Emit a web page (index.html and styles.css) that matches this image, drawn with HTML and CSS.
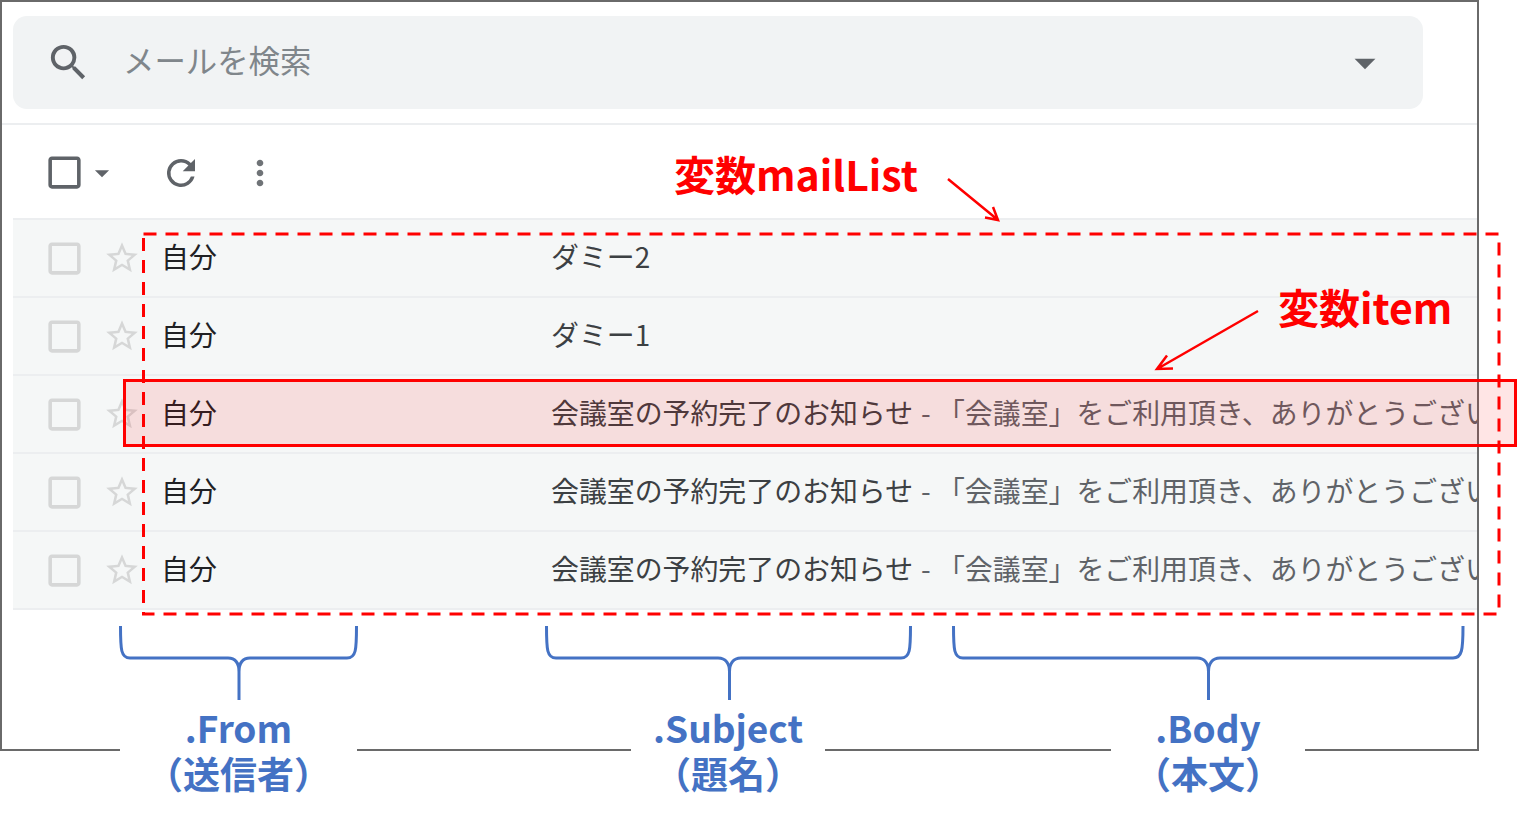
FILE: index.html
```html
<!DOCTYPE html>
<html lang="ja">
<head>
  <meta charset="UTF-8" />
  <title>mailList</title>
  <link rel="stylesheet" href="styles.css">
</head>
<body>
  <div class="frame">
    <!-- Search -->
    <div class="search">
      <svg class="search-icon" viewBox="0 0 24 24"><path d="M15.5 14h-.79l-.28-.27A6.47 6.47 0 0 0 16 9.5 6.5 6.5 0 1 0 9.5 16c1.61 0 3.09-.59 4.23-1.57l.27.28v.79l5 4.99L20.49 19l-4.99-5zm-6 0C7.01 14 5 11.99 5 9.5S7.01 5 9.5 5 14 7.01 14 9.5 11.99 14 9.5 14z"/></svg>
      <span class="search-text">メールを検索</span>
      <svg class="search-caret" viewBox="0 0 24 24"><path d="M7 10l5 5 5-5z"/></svg>
    </div>

    <!-- Toolbar -->
    <div class="toolbar">
      <svg class="tool-check" viewBox="0 0 24 24"><path d="M19 5v14H5V5h14m0-2H5c-1.1 0-2 .9-2 2v14c0 1.1.9 2 2 2h14c1.1 0 2-.9 2-2V5c0-1.1-.9-2-2-2z"/></svg>
      <svg class="tool-caret" viewBox="0 0 24 24"><path d="M7 10l5 5 5-5z"/></svg>
      <svg class="tool-refresh" viewBox="0 0 24 24"><path d="M17.65 6.35A7.96 7.96 0 0 0 12 4a8 8 0 1 0 7.73 10h-2.08A6 6 0 1 1 12 6c1.66 0 3.14.69 4.22 1.78L13 11h7V4l-2.35 2.35z"/></svg>
      <svg class="tool-more" viewBox="0 0 24 24"><path d="M12 8c1.1 0 2-.9 2-2s-.9-2-2-2-2 .9-2 2 .9 2 2 2zm0 2c-1.1 0-2 .9-2 2s.9 2 2 2 2-.9 2-2-.9-2-2-2zm0 6c-1.1 0-2 .9-2 2s.9 2 2 2 2-.9 2-2-.9-2-2-2z"/></svg>
    </div>

    <!-- Mail list -->
    <div class="mail-list">
      <div class="mail-row">
        <svg class="row-check" viewBox="0 0 24 24"><path d="M19 5v14H5V5h14m0-2H5c-1.1 0-2 .9-2 2v14c0 1.1.9 2 2 2h14c1.1 0 2-.9 2-2V5c0-1.1-.9-2-2-2z"/></svg>
        <svg class="row-star" viewBox="0 0 24 24"><path d="M22 9.24l-7.19-.62L12 2 9.19 8.63 2 9.24l5.46 4.73L5.82 21 12 17.27 18.18 21l-1.63-7.03L22 9.24zM12 15.4l-3.76 2.27 1-4.28-3.32-2.88 4.38-.38L12 6.1l1.71 4.04 4.38.38-3.32 2.88 1 4.28L12 15.4z"/></svg>
        <span class="from">自分</span>
        <span class="subject">ダミー2</span>
      </div>
      <div class="mail-row">
        <svg class="row-check" viewBox="0 0 24 24"><path d="M19 5v14H5V5h14m0-2H5c-1.1 0-2 .9-2 2v14c0 1.1.9 2 2 2h14c1.1 0 2-.9 2-2V5c0-1.1-.9-2-2-2z"/></svg>
        <svg class="row-star" viewBox="0 0 24 24"><path d="M22 9.24l-7.19-.62L12 2 9.19 8.63 2 9.24l5.46 4.73L5.82 21 12 17.27 18.18 21l-1.63-7.03L22 9.24zM12 15.4l-3.76 2.27 1-4.28-3.32-2.88 4.38-.38L12 6.1l1.71 4.04 4.38.38-3.32 2.88 1 4.28L12 15.4z"/></svg>
        <span class="from">自分</span>
        <span class="subject">ダミー1</span>
      </div>
      <div class="mail-row">
        <svg class="row-check" viewBox="0 0 24 24"><path d="M19 5v14H5V5h14m0-2H5c-1.1 0-2 .9-2 2v14c0 1.1.9 2 2 2h14c1.1 0 2-.9 2-2V5c0-1.1-.9-2-2-2z"/></svg>
        <svg class="row-star" viewBox="0 0 24 24"><path d="M22 9.24l-7.19-.62L12 2 9.19 8.63 2 9.24l5.46 4.73L5.82 21 12 17.27 18.18 21l-1.63-7.03L22 9.24zM12 15.4l-3.76 2.27 1-4.28-3.32-2.88 4.38-.38L12 6.1l1.71 4.04 4.38.38-3.32 2.88 1 4.28L12 15.4z"/></svg>
        <span class="from">自分</span>
        <span class="subject">会議室の予約完了のお知らせ</span>
        <span class="body-text">- 「会議室」をご利用頂き、ありがとうございます</span>
      </div>
      <div class="mail-row">
        <svg class="row-check" viewBox="0 0 24 24"><path d="M19 5v14H5V5h14m0-2H5c-1.1 0-2 .9-2 2v14c0 1.1.9 2 2 2h14c1.1 0 2-.9 2-2V5c0-1.1-.9-2-2-2z"/></svg>
        <svg class="row-star" viewBox="0 0 24 24"><path d="M22 9.24l-7.19-.62L12 2 9.19 8.63 2 9.24l5.46 4.73L5.82 21 12 17.27 18.18 21l-1.63-7.03L22 9.24zM12 15.4l-3.76 2.27 1-4.28-3.32-2.88 4.38-.38L12 6.1l1.71 4.04 4.38.38-3.32 2.88 1 4.28L12 15.4z"/></svg>
        <span class="from">自分</span>
        <span class="subject">会議室の予約完了のお知らせ</span>
        <span class="body-text">- 「会議室」をご利用頂き、ありがとうございます</span>
      </div>
      <div class="mail-row">
        <svg class="row-check" viewBox="0 0 24 24"><path d="M19 5v14H5V5h14m0-2H5c-1.1 0-2 .9-2 2v14c0 1.1.9 2 2 2h14c1.1 0 2-.9 2-2V5c0-1.1-.9-2-2-2z"/></svg>
        <svg class="row-star" viewBox="0 0 24 24"><path d="M22 9.24l-7.19-.62L12 2 9.19 8.63 2 9.24l5.46 4.73L5.82 21 12 17.27 18.18 21l-1.63-7.03L22 9.24zM12 15.4l-3.76 2.27 1-4.28-3.32-2.88 4.38-.38L12 6.1l1.71 4.04 4.38.38-3.32 2.88 1 4.28L12 15.4z"/></svg>
        <span class="from">自分</span>
        <span class="subject">会議室の予約完了のお知らせ</span>
        <span class="body-text">- 「会議室」をご利用頂き、ありがとうございます</span>
      </div>
    </div>
  </div>

  <!-- Annotations drawn over the screenshot -->
  <div class="item-box"></div>
  <svg class="marks" width="1517" height="821" viewBox="0 0 1517 821">
    <rect class="dash" x="143.500" y="234" width="1355.500" height="380"/>
    <path class="arrow" d="M948 179L998 220M985 217.500L998 220L993 207"/>
    <path class="arrow" d="M1258 311L1157 369M1173 368.500L1157 369L1167 355.500"/>
    <path class="brace" d="M120.500 626C120.500 650 121 658 130 658H228C236 658 239 664 239 672V700M239 672C239 664 242 658 250 658H347C356 658 356.500 650 356.500 626"/>
    <path class="brace" d="M546.500 626C546.500 650 547 658 556 658H718C726 658 729.500 664 729.500 672V700M729.500 672C729.500 664 733 658 741 658H901C910 658 910.500 650 910.500 626"/>
    <path class="brace" d="M953.500 626C953.500 650 954 658 963 658H1197C1205 658 1208.500 664 1208.500 672V700M1208.500 672C1208.500 664 1212 658 1220 658H1453C1462 658 1463 650 1463 626"/>
  </svg>
  <div class="note note-list">変数mailList</div>
  <div class="note note-item">変数item</div>
  <div class="label label-from">.From<br>（送信者）</div>
  <div class="label label-subject">.Subject<br>（題名）</div>
  <div class="label label-body">.Body<br>（本文）</div>
</body>
</html>
```

FILE: styles.css
```css
* { margin: 0; padding: 0; box-sizing: border-box; }
body {
  position: relative;
  width: 1517px;
  height: 821px;
  overflow: hidden;
  background: #fff;
  font-family: "Noto Sans CJK JP", "Noto Sans", sans-serif;
}

svg { display: block; flex: none; }


/* Screenshot frame */
.frame {
  width: 1479px;
  height: 751px;
  border: 2px solid #6a6a6a;
}

.search {
  display: flex;
  align-items: center;
  height: 93px;
  margin: 14px 54px 0 11px;
  background: #f1f3f4;
  border-radius: 14px;
}

.search-icon {
  width: 47px;
  height: 47px;
  margin-left: 32px;
  fill: #5f6368;
}

.search-text {
  margin-left: 31px;
  padding-bottom: 6px;
  font-size: 31.400px;
  color: #80868b;
}

.search-caret {
  width: 50px;
  height: 50px;
  margin-left: auto;
  margin-right: 33px;
  fill: #5f6368;
}

.toolbar {
  display: flex;
  align-items: center;
  height: 95px;
  margin-top: 14px;
  padding: 2px 0 0 41px;
  border-top: 2px solid #eceef0;
}

.tool-check { width: 43px; height: 43px; fill: #5f6368; }
.tool-caret { width: 34px; height: 34px; margin-left: -1px; fill: #5f6368; }
.tool-refresh { width: 42px; height: 42px; margin-left: 41px; fill: #5f6368; }
.tool-more { width: 40px; height: 40px; margin-left: 38px; fill: #6f7377; }


/* Mail rows */
.mail-list {
  margin-left: 11px;
}

.mail-row {
  display: flex;
  align-items: center;
  height: 78px;
  padding-left: 30px;
  overflow: hidden;
  white-space: nowrap;
  background: #f5f7f7;
  border-top: 2px solid #eceef0;
  font-size: 27.900px;
}

.mail-row:last-child {
  height: 80px;
  border-bottom: 2px solid #eceef0;
}

.row-check { width: 43px; height: 43px; fill: #d6d7d7; }
.row-star { width: 38px; height: 38px; margin-left: 17px; fill: #d6d7d7; }

.mail-row span {
  flex: none;
  padding-bottom: 4px;
}

.from {
  width: 390px;
  margin-left: 20px;
  color: #202124;
}

.subject { color: #3c4043; }

.body-text {
  margin-left: 8px;
  color: #5f6368;
}


/* Annotations */
.item-box {
  position: absolute;
  left: 123px;
  top: 379px;
  width: 1394px;
  height: 68px;
  border: 3px solid #f00;
  background: rgba(255, 0, 0, 0.1);
}

.marks {
  position: absolute;
  left: 0;
  top: 0;
}

.marks path, .marks rect { fill: none; }
.dash { stroke: #f00; stroke-width: 3; stroke-dasharray: 13 9; }
.arrow { stroke: #f00; stroke-width: 2.500; }
.brace { stroke: #4472c4; stroke-width: 3; }

.note {
  position: absolute;
  color: #f00;
  font-weight: 700;
  font-size: 41px;
  line-height: 50px;
  white-space: nowrap;
}

.note-list { left: 674px; top: 148px; }
.note-item { left: 1278px; top: 281px; }

.label {
  position: absolute;
  top: 704px;
  height: 92px;
  background: #fff;
  color: #4472c4;
  font-weight: 700;
  font-size: 37px;
  line-height: 46px;
  text-align: center;
  white-space: nowrap;
}

.label-from { left: 120px; width: 237px; }
.label-subject { left: 631px; width: 194px; }
.label-body { left: 1111px; width: 194px; }
```
